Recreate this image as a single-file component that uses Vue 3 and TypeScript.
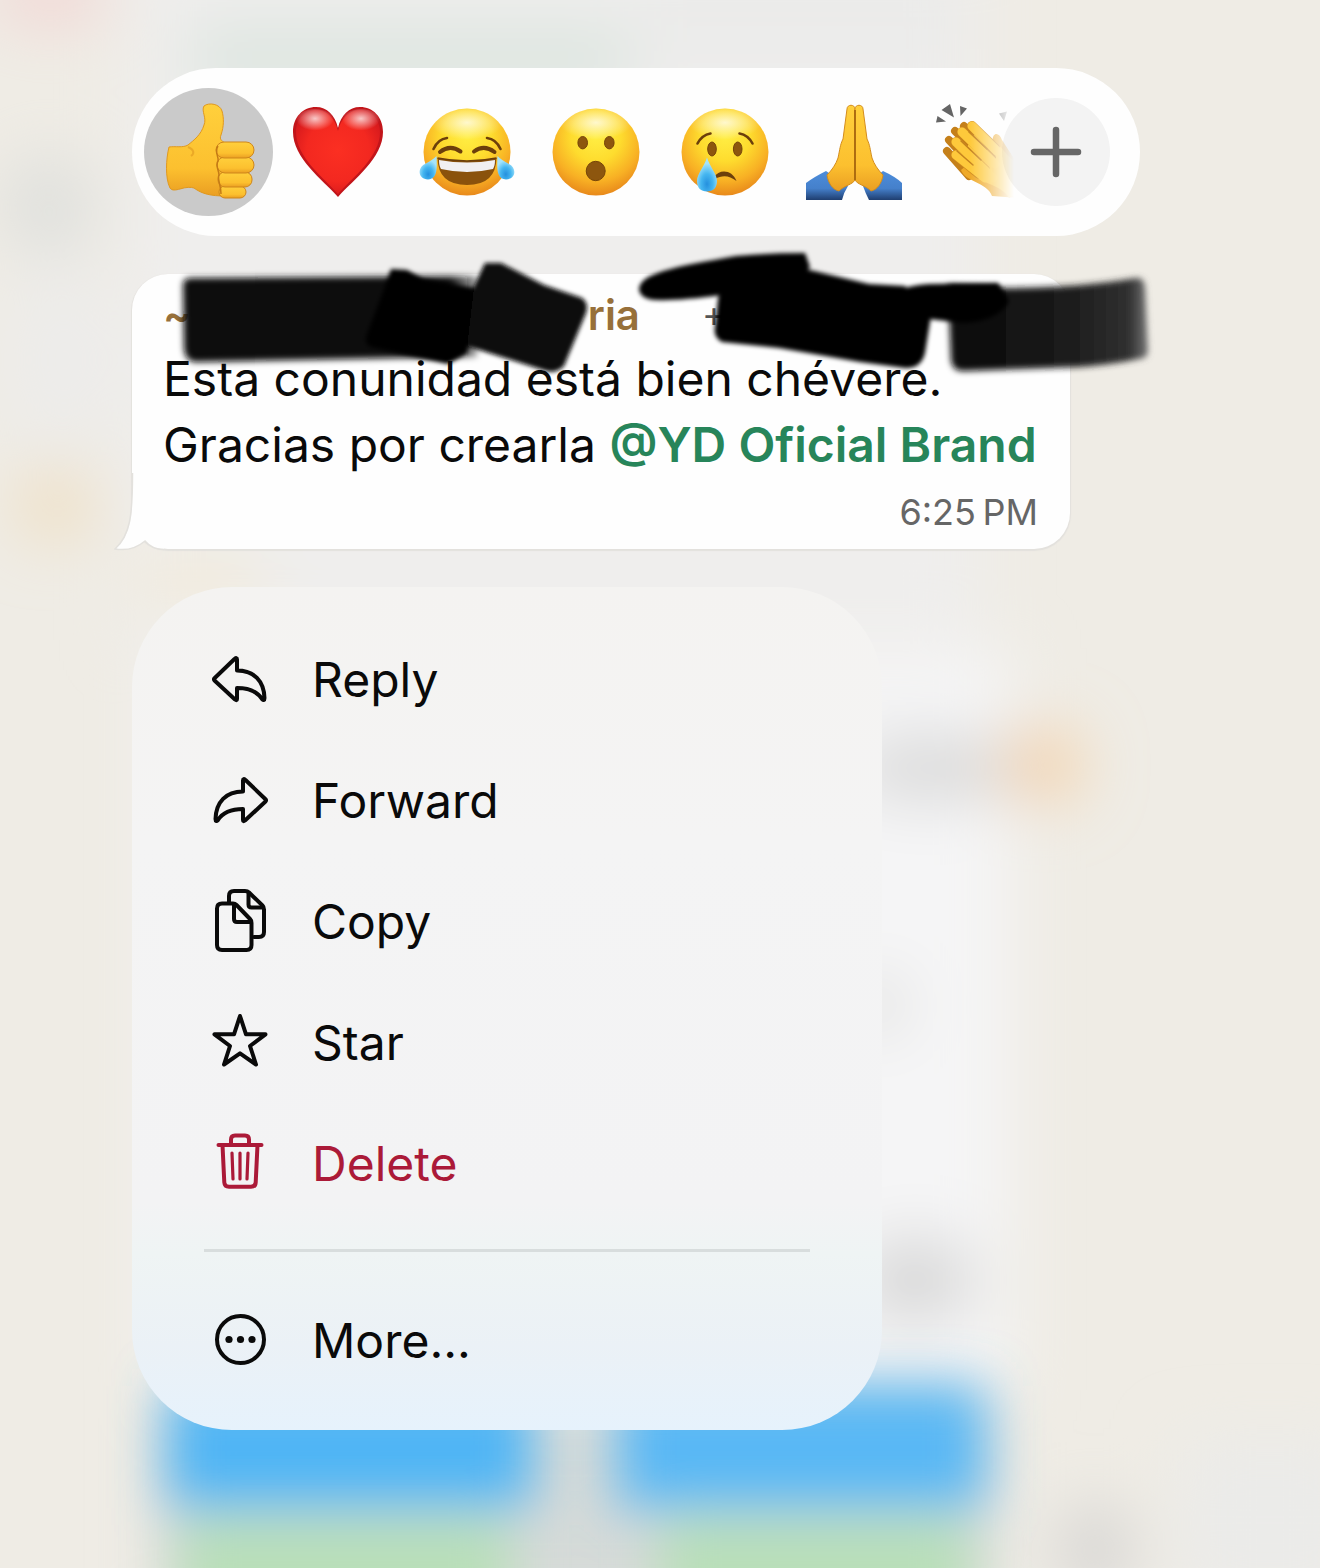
<script setup lang="ts">
import { ref } from 'vue'

type IconName = 'reply' | 'forward' | 'copy' | 'star' | 'trash' | 'more'

interface Action {
  label: string
  icon: IconName
  danger?: boolean
}

const reactions = ['thumb', 'heart', 'joy', 'wow', 'cry', 'pray', 'clap'] as const
type Reaction = (typeof reactions)[number]

const names: Record<Reaction, string> = {
  thumb: 'Thumbs up',
  heart: 'Heart',
  joy: 'Laughing',
  wow: 'Surprised',
  cry: 'Crying',
  pray: 'Folded hands',
  clap: 'Clapping',
}

const selected = ref<Reaction>('thumb')

const actions: Action[] = [
  { label: 'Reply', icon: 'reply' },
  { label: 'Forward', icon: 'forward' },
  { label: 'Copy', icon: 'copy' },
  { label: 'Star', icon: 'star' },
  { label: 'Delete', icon: 'trash', danger: true },
]
const extra: Action[] = [{ label: 'More...', icon: 'more' }]
const groups = [actions, extra]
</script>

<template>
  <main class="screen">
    <svg class="backdrop" viewBox="0 0 1320 1568" preserveAspectRatio="none" aria-hidden="true">
      <defs>
        <filter id="b30" x="-50%" y="-50%" width="200%" height="200%"><feGaussianBlur stdDeviation="32" /></filter>
        <filter id="b20" x="-50%" y="-50%" width="200%" height="200%"><feGaussianBlur stdDeviation="26" /></filter>
      </defs>
      <rect width="1320" height="1568" fill="#efece5" />
      <g filter="url(#b30)">
        <rect x="130" y="-60" width="850" height="700" fill="#efeeed" />
        <rect x="640" y="-40" width="320" height="110" fill="#ebebea" />
        <rect x="190" y="28" width="440" height="60" fill="#dae4de" />
        <ellipse cx="50" cy="-5" rx="60" ry="26" fill="#f3d3d2" />
        <ellipse cx="48" cy="205" rx="48" ry="50" fill="#dfe0dd" />
        <ellipse cx="60" cy="360" rx="60" ry="100" fill="#edecea" />
        <ellipse cx="55" cy="505" rx="42" ry="34" fill="#efdfc2" />
        <ellipse cx="200" cy="580" rx="70" ry="24" fill="#f3ead6" />
        <rect x="160" y="650" width="850" height="740" fill="#f5f5f6" />
        <ellipse cx="935" cy="768" rx="90" ry="30" fill="#d6d6d6" />
        <ellipse cx="1042" cy="765" rx="38" ry="36" fill="#f4d0a6" />
        <ellipse cx="878" cy="1005" rx="26" ry="26" fill="#dadad8" />
        <ellipse cx="915" cy="1280" rx="60" ry="42" fill="#d6d6d6" />
        <rect x="160" y="1400" width="830" height="220" fill="#d5dad8" />
        <ellipse cx="1095" cy="1550" rx="36" ry="46" fill="#d4d3d1" />
        <rect x="1180" y="1440" width="180" height="160" fill="#ebebe9" />
      </g>
      <g filter="url(#b20)">
        <rect x="180" y="1515" width="330" height="130" fill="#b9dfb9" />
        <rect x="660" y="1515" width="310" height="130" fill="#b9dfb9" />
        <rect x="168" y="1386" width="364" height="122" fill="#50b5f5" />
        <rect x="618" y="1386" width="366" height="122" fill="#58b8f5" />
      </g>
    </svg>

    <section class="reactions" aria-label="Reactions">
      <div class="reaction-list">
        <button
          v-for="r in reactions"
          :key="r"
          type="button"
          class="reaction"
          :class="{ selected: r === selected }"
          :aria-label="names[r]"
          :aria-pressed="r === selected"
          @click="selected = r"
        >
          <svg class="emoji" viewBox="0 0 96 96" aria-hidden="true">
            <defs>
              <radialGradient :id="'face-' + r" cx="50%" cy="32%" r="68%">
                <stop offset="0" stop-color="#ffee44" />
                <stop offset=".42" stop-color="#fedc2e" />
                <stop offset=".76" stop-color="#f8b024" />
                <stop offset="1" stop-color="#e8891b" />
              </radialGradient>
              <radialGradient :id="'shine-' + r" cx="50%" cy="40%" r="50%">
                <stop offset="0" stop-color="#fff" stop-opacity=".75" />
                <stop offset="1" stop-color="#fff" stop-opacity="0" />
              </radialGradient>
              <radialGradient :id="'tear-' + r" cx="50%" cy="78%" r="60%">
                <stop offset="0" stop-color="#2590de" />
                <stop offset=".5" stop-color="#45b6f0" />
                <stop offset="1" stop-color="#a6e4fb" />
              </radialGradient>
              <linearGradient :id="'skin-' + r" x1="0" y1="0" x2="0" y2="1">
                <stop offset="0" stop-color="#ffd03c" />
                <stop offset=".7" stop-color="#fcc02f" />
                <stop offset="1" stop-color="#ea9e22" />
              </linearGradient>
            </defs>

            <g v-if="r === 'thumb'">
              <path d="M8 43 C5 55 4 74 9 84 C11 87 15 86 19 85 C25 83 30 83 33 84 C41 90 50 92 64 92 L66 40 C61 37 58 36 60 31 C63 22 63 14 61 7 C59 0 48 -2 43 2 C40 7 46 14 43 21 C40 31 33 36 27 41 C22 44 14 42 8 43Z" :fill="'url(#skin-' + r + ')'" stroke="#e0981f" stroke-width="1" />
              <path d="M27 43 C34 46 33 50 30 52" fill="none" stroke="#e0981f" stroke-width="2" opacity=".6" />
              <g :fill="'url(#skin-' + r + ')'" stroke="#cf861b" stroke-width="1">
                <rect x="58" y="82" width="27" height="12" rx="6" />
                <rect x="57" y="68" width="34" height="15" rx="7" />
                <rect x="56" y="53" width="37" height="16" rx="8" />
                <rect x="55" y="38" width="38" height="16" rx="8" />
              </g>
              <path d="M57 42 C53 48 58 52 57 57 C54 62 58 66 58 71 C56 76 60 80 60 90" fill="none" stroke="#c47a16" stroke-width="1.5" />
            </g>

            <g v-else-if="r === 'heart'">
              <defs>
                <radialGradient id="heart-fill" cx="50%" cy="48%" r="62%">
                  <stop offset="0" stop-color="#fb2f22" />
                  <stop offset=".6" stop-color="#f32820" />
                  <stop offset="1" stop-color="#cf161c" />
                </radialGradient>
              </defs>
              <path d="M48 93 C32 75 3 54 3 28 C3 13 13 3 26 3 C37 3 45 11 48 24 C51 11 59 3 70 3 C83 3 93 13 93 28 C93 54 64 75 48 93Z" fill="#c2151a" />
              <path d="M48 90 C34 74 6 53 6 28 C6 15 15 6 26 6 C37 6 45 14 48 27 C51 14 59 6 70 6 C81 6 90 15 90 28 C90 53 62 74 48 90Z" fill="url(#heart-fill)" />
              <ellipse cx="25" cy="17" rx="19" ry="12" :fill="'url(#shine-' + r + ')'" />
              <ellipse cx="71" cy="17" rx="19" ry="12" :fill="'url(#shine-' + r + ')'" />
            </g>

            <g v-else-if="r === 'joy' || r === 'wow' || r === 'cry'">
              <circle cx="48" cy="48" r="43.5" :fill="'url(#face-' + r + ')'" />
              <ellipse cx="48" cy="22" rx="36" ry="17" :fill="'url(#shine-' + r + ')'" />
              <g v-if="r === 'joy'">
                <g fill="none" stroke="#6c3f0b" stroke-linecap="round">
                  <path d="M14.5 45 Q19 35 28 34" stroke-width="2.6" />
                  <path d="M81.5 45 Q77 35 68 34" stroke-width="2.6" />
                  <path d="M21 48 Q31 40 41.5 47.5" stroke-width="4" />
                  <path d="M55 47.5 Q65 40 75.5 48" stroke-width="4" />
                </g>
                <path d="M18.5 54 Q48 60 77.5 54 Q77 81 48 81 Q19 81 18.5 54Z" fill="#8a520c" />
                <path d="M20 56 Q48 61 76 56 Q76 62 74 65 Q48 71 22 65 Q20 62 20 56Z" fill="#f1f0f2" />
                <path d="M18.5 54 Q48 60 77.5 54" fill="none" stroke="#6c3f0b" stroke-width="1.5" />
                <path d="M17.5 52 C18 63 19 75 9 75.5 C-1 75 -2 64 6 60 C11 57 15 55 17.5 52Z" :fill="'url(#tear-' + r + ')'" />
                <path d="M78.5 52 C78 63 77 75 87 75.5 C97 75 98 64 90 60 C85 57 81 55 78.5 52Z" :fill="'url(#tear-' + r + ')'" />
              </g>
              <g v-else-if="r === 'wow'" fill="#8d560e" stroke="#764409" stroke-width="1">
                <ellipse cx="34.7" cy="38.7" rx="4.8" ry="6.2" />
                <ellipse cx="61.3" cy="38.7" rx="4.8" ry="6.2" />
                <ellipse cx="47.7" cy="67" rx="9.5" ry="9.7" />
              </g>
              <g v-else>
                <g fill="none" stroke="#6c3f0b" stroke-linecap="round" stroke-width="2.6">
                  <path d="M20.5 39.5 Q25 31 33.5 29.5" />
                  <path d="M75.5 39.5 Q71 31 62.5 29.5" />
                </g>
                <g fill="#8d560e" stroke="#764409" stroke-width="1">
                  <ellipse cx="35" cy="45" rx="4.3" ry="7" />
                  <ellipse cx="60.7" cy="45" rx="4.3" ry="7" />
                </g>
                <path d="M37 73 C42 65 55 65 59.5 77 C52 71 45 71 38 75Z" fill="#6c3f0b" />
                <path d="M30 53.5 C33 63 40 70 40 77 C40 84 36 87.5 30 87.5 C24 87.5 20 84 20 77 C20 70 27 63 30 53.5Z" :fill="'url(#tear-' + r + ')'" />
              </g>
            </g>

            <g v-else-if="r === 'pray'">
              <defs>
                <linearGradient id="sleeve" x1="0" y1="0" x2="0" y2="1">
                  <stop offset="0" stop-color="#4d8ddb" />
                  <stop offset=".6" stop-color="#4580cb" />
                  <stop offset="1" stop-color="#1f3e70" />
                </linearGradient>
              </defs>
              <path d="M0 79 Q8 73 20 67 L42 82 Q38 88 36 96 H0Z" fill="url(#sleeve)" />
              <path d="M96 79 Q90 73 77 67 L57 82 Q59 88 63 96 H96Z" fill="url(#sleeve)" />
              <path d="M41 5 C41 0 49 0 49 5 V76 C46 81 39 81 33 87 C27 86 22 79 21 71 C26 66 30 60 32 54 C34 45 34 41 37 35 Z" :fill="'url(#skin-' + r + ')'" stroke="#d38c1d" stroke-width="1" />
              <path d="M57 5 C57 0 49 0 49 5 V76 C52 81 59 81 65 87 C71 86 76 79 77 71 C72 66 68 60 66 54 C64 45 64 41 61 35 Z" :fill="'url(#skin-' + r + ')'" stroke="#d38c1d" stroke-width="1" />
              <path d="M49 6 V76" stroke="#a8680f" stroke-width="1.8" />
            </g>

            <g v-else>
              <path d="M6.5 6 L15 0 L19 13.5Z M25 2 L32 4.5 L25.5 12Z M2.5 12 L11 17.5 L1 18.5Z M64 9.5 L72 7.5 L69 17Z" fill="#656565" />
              <g stroke="#c5801a" stroke-width="8" stroke-linecap="round">
                <path d="M12 47 L34 72" /><path d="M14 36 L40 64" /><path d="M20 27 L46 52" /><path d="M29 22 L58 46" />
              </g>
              <path d="M58 40 C56 28 64 27 67 36 L80 56 L84 94 L57 92 C52 78 30 78 26 66Z" fill="#efa928" />
              <path d="M40 30 L58 36 C66 42 72 52 82 60 L92 84 L74 94 C66 80 46 80 38 70 L24 56Z" fill="#fdc63a" />
              <g stroke="#d18d1e" stroke-width="10" stroke-linecap="round">
                <path d="M37 22 L60 44" /><path d="M27 28 L56 54" /><path d="M21 38 L50 66" /><path d="M21 51 L44 70" />
              </g>
              <g stroke="#fec93b" stroke-width="9" stroke-linecap="round">
                <path d="M37 22 L62 47" /><path d="M27 28 L60 60" /><path d="M21 38 L58 74" /><path d="M21 51 L50 74" />
              </g>
              <path d="M34 28 L52 45 M26 37 L46 56 M22 47 L38 61" stroke="#c5831e" stroke-width="1.5" stroke-linecap="round" />
            </g>
          </svg>
        </button>
      </div>
      <button type="button" class="add" aria-label="More reactions">
        <svg viewBox="0 0 54 54" aria-hidden="true">
          <path d="M27 5 V49 M5 27 H49" stroke="#666" stroke-width="6.5" stroke-linecap="round" />
        </svg>
      </button>
    </section>

    <article class="bubble">
      <svg class="tail" viewBox="0 0 50 80" aria-hidden="true">
        <path d="M19 0 C19 42 17 62 1 76 C13 78 24 74 31 68 C36 74 42 76 50 76 V0Z" fill="#fefefe" />
        <path d="M18.5 0 C18.5 42 16.5 62 1 76 C13 78 24 74 31 68 C36 74 42 76.5 50 76.5" fill="none" stroke="#e3e1dd" stroke-width="1.5" />
      </svg>
      <header class="from">
        <span class="sender"><span>~</span><span>ria</span></span>
        <span class="phone">+</span>
      </header>
      <p class="message">Esta conunidad está bien chévere.<br />Gracias por crearla <a href="#" class="mention">@YD Oficial Brand</a></p>
      <time class="time">6:25&#8201;PM</time>
      <svg class="marker" viewBox="133 273 937 276" role="img" aria-label="Redacted">
        <defs>
          <filter id="ink" x="-10%" y="-10%" width="120%" height="120%"><feGaussianBlur stdDeviation="2" /></filter>
          <filter id="ink-soft" x="-10%" y="-20%" width="120%" height="140%"><feGaussianBlur stdDeviation="3" /></filter>
          <linearGradient id="ink-fade" gradientUnits="userSpaceOnUse" x1="950" y1="0" x2="1150" y2="0">
            <stop offset="0" stop-color="#080808" />
            <stop offset=".6" stop-color="#1c1c1c" />
            <stop offset=".9" stop-color="#303030" />
            <stop offset="1" stop-color="#777" />
          </linearGradient>
          <linearGradient id="ink-left" gradientUnits="userSpaceOnUse" x1="183" y1="0" x2="480" y2="0">
            <stop offset="0" stop-color="#0b0b0b" />
            <stop offset=".9" stop-color="#0b0b0b" />
            <stop offset="1" stop-color="#0b0b0b" stop-opacity=".3" />
          </linearGradient>
        </defs>
        <g filter="url(#ink-soft)">
          <path d="M184 284 Q184 277 192 277 L478 275 V356 L400 357 L196 361 Q186 360 185 348Z" fill="url(#ink-left)" />
          <path d="M949 284 L1006 287 Q1080 287 1137 277 Q1145 276 1146 286 L1149 350 Q1149 357 1140 358 Q1110 364 1080 366 L966 370 Q954 371 952 360Z" fill="url(#ink-fade)" />
        </g>
        <g filter="url(#ink)">
          <path d="M392 268 L408 269 L424 278 L482 288 L468 352 L449 363 L372 346 Q364 342 368 333 L385 288Z" fill="#020202" />
          <path d="M486 262 L502 262 L545 284 L583 297 Q590 302 587 312 L565 365 Q556 374 544 369 L468 345 L475 285Z" fill="#0a0a0a" />
          <path d="M719 298 Q722 284 740 272 L785 264 L815 270 L870 283 L906 285 L932 315 L926 352 Q922 368 906 367 L861 361 L780 347 L723 341 Q714 336 716 326Z" fill="#050505" />
          <path d="M640 289 C640 272 675 266 737 255 Q770 252 806 252 L811 266 L800 280 L723 294 Q680 300 656 299 Q642 298 640 289Z" fill="#000" />
          <path d="M893 295 Q905 284 930 283 L999 282 L1010 300 Q1000 320 964 322 L930 318 L899 309Z" fill="#000" />
        </g>
      </svg>
    </article>

    <nav class="menu" aria-label="Message actions">
      <ul v-for="(group, g) in groups" :key="g" class="group">
        <li v-for="a in group" :key="a.label">
          <button type="button" class="action" :class="{ danger: a.danger }">
            <svg class="icon" viewBox="0 0 64 64" aria-hidden="true">
              <g fill="none" stroke="currentColor" stroke-width="4" stroke-linecap="round" stroke-linejoin="round">
                <path v-if="a.icon === 'reply'" d="M29 11.5 V22.5 C46 22.5 56 33 56.5 50 Q56.5 53.5 54 51 C49 43 41 40 29 40 V51 Q29 53 27 51.5 L6.5 32.5 Q5.5 31.3 6.5 30.2 L26.5 11 Q29 9 29 11.5Z" />
                <path v-else-if="a.icon === 'forward'" d="M35 11.5 V22.5 C18 22.5 8 33 7.5 50 Q7.5 53.5 10 51 C15 43 23 40 35 40 V51 Q35 53 37 51.5 L57.5 32.5 Q58.5 31.3 57.5 30.2 L37.5 11 Q35 9 35 11.5Z" />
                <g v-else-if="a.icon === 'copy'">
                  <path d="M14 13.5 H25 Q27 13.5 28.5 15 L42 29 Q43.5 30.5 43.5 33 V55 Q43.5 60 38.5 60 H14 Q9 60 9 55 V18.5 Q9 13.500 14 13.5Z" />
                  <path d="M26 15 V29 Q26 32 29 32 H43" />
                  <path d="M21 12 V6 Q21 1 26 1 H37 Q39.5 1 41 2.5 L54.5 15.5 Q56 17 56 19.5 V42 Q56 47 51 47 H46" />
                  <path d="M40.5 3 V14.5 Q40.5 17.5 43.5 17.5 H55" />
                </g>
                <path v-else-if="a.icon === 'star'" d="M32 5 L38 23.3 H57.5 L42 35 L48 53.5 L32 42.3 L16 53.5 L22 35 L6.5 23.3 H26Z" />
                <g v-else-if="a.icon === 'trash'">
                  <path d="M10.5 13 H53.5" />
                  <path d="M23 13 V7.5 Q23 3.5 27 3.5 H37 Q41 3.5 41 7.5 V13" />
                  <path d="M14.500 13 L16.3 50.5 Q16.6 54.8 21 54.8 H43 Q47.4 54.8 47.7 50.5 L49.5 13" />
                  <path d="M24 21 L25 47 M32 21 V47 M40 21 L39 47" stroke-width="3.2" />
                </g>
                <g v-else>
                  <circle cx="32.5" cy="30.5" r="23.5" />
                  <g fill="currentColor" stroke="none">
                    <circle cx="21" cy="30.5" r="3.6" /><circle cx="32.5" cy="30.5" r="3.6" /><circle cx="44" cy="30.5" r="3.6" />
                  </g>
                </g>
              </g>
            </svg>
            <span>{{ a.label }}</span>
          </button>
        </li>
      </ul>
    </nav>
  </main>
</template>

<style>
body {
  margin: 0;
}
</style>

<style scoped>
.screen {
  position: relative;
  box-sizing: border-box;
  min-height: 100vh;
  padding: 68px 132px 138px;
  display: flex;
  flex-direction: column;
  align-items: flex-start;
  gap: 38px;
  overflow: hidden;
  background: #efece5;
  color: #0a0a0a;
  font-family: Inter, "Liberation Sans", sans-serif;
}
.backdrop {
  position: absolute;
  inset: 0;
  width: 100%;
  height: 100%;
}
button {
  border: 0;
  margin: 0;
  padding: 0;
  background: none;
  color: inherit;
  font: inherit;
  cursor: pointer;
}
.reactions {
  position: relative;
  box-sizing: border-box;
  width: 100%;
  max-width: 1008px;
  padding: 20px 30px 20px 12px;
  display: flex;
  align-items: center;
  border-radius: 84px;
  background: #fefefe;
}
.reaction-list {
  flex: 1;
  min-width: 0;
  display: flex;
  overflow: hidden;
  mask-image: linear-gradient(to right, #000 calc(100% - 46px), transparent calc(100% - 2px));
}
.reaction {
  flex: none;
  width: 129px;
  height: 128px;
  display: grid;
  place-items: center;
  border-radius: 50%;
}
.reaction.selected {
  background: #cacaca;
}
.emoji {
  width: 96px;
  height: 96px;
  overflow: visible;
}
.add {
  flex: none;
  width: 108px;
  height: 108px;
  margin-left: -14px;
  display: grid;
  place-items: center;
  border-radius: 50%;
  background: #f3f3f3;
}
.add svg {
  width: 54px;
  height: 54px;
}
.bubble {
  position: relative;
  box-sizing: border-box;
  width: 100%;
  max-width: 938px;
  padding: 10px 32px 15px 31px;
  border-radius: 36px;
  background: #fefefe;
  box-shadow: 0 1px 1px 1px #e3e1dd;
}
.tail {
  position: absolute;
  left: -18px;
  bottom: -4px;
  width: 50px;
  height: 80px;
}
.from {
  display: flex;
  align-items: center;
  height: 60px;
}
.sender {
  width: 477px;
  display: flex;
  justify-content: space-between;
  color: #97703a;
  font-size: 42px;
  font-weight: 600;
}
.phone {
  margin-left: 62px;
  color: #555;
  font-size: 36px;
}
.message {
  margin: 2px 0 0;
  font-size: 48px;
  line-height: 66px;
  white-space: nowrap;
}
.mention {
  color: #27855a;
  font-weight: 600;
  text-decoration: none;
}
.time {
  display: block;
  margin-top: 12px;
  color: #666;
  font-size: 36px;
  line-height: 44px;
  text-align: right;
}
.marker {
  position: absolute;
  left: 0;
  top: 0;
  width: 937px;
  height: 276px;
  overflow: visible;
}
.menu {
  position: relative;
  box-sizing: border-box;
  width: 100%;
  max-width: 750px;
  padding: 32px 72px 29px;
  border-radius: 100px;
  background: linear-gradient(#f4f3f1, #f4f4f4 30%, #f3f3f4 73%, #eff4f4 79%, #ebf1f6 90%, #e6f2fc);
}
.group {
  margin: 0;
  padding: 0;
  list-style: none;
}
.group + .group {
  margin-top: 25px;
  padding-top: 28px;
  border-top: 3px solid #d8dddd;
}
.action {
  width: 100%;
  height: 121px;
  padding-left: 4px;
  display: flex;
  align-items: center;
  gap: 40px;
  font-size: 48px;
  text-align: left;
}
.action.danger {
  color: #ab1a38;
}
.icon {
  flex: none;
  width: 64px;
  height: 64px;
  overflow: visible;
}
</style>
